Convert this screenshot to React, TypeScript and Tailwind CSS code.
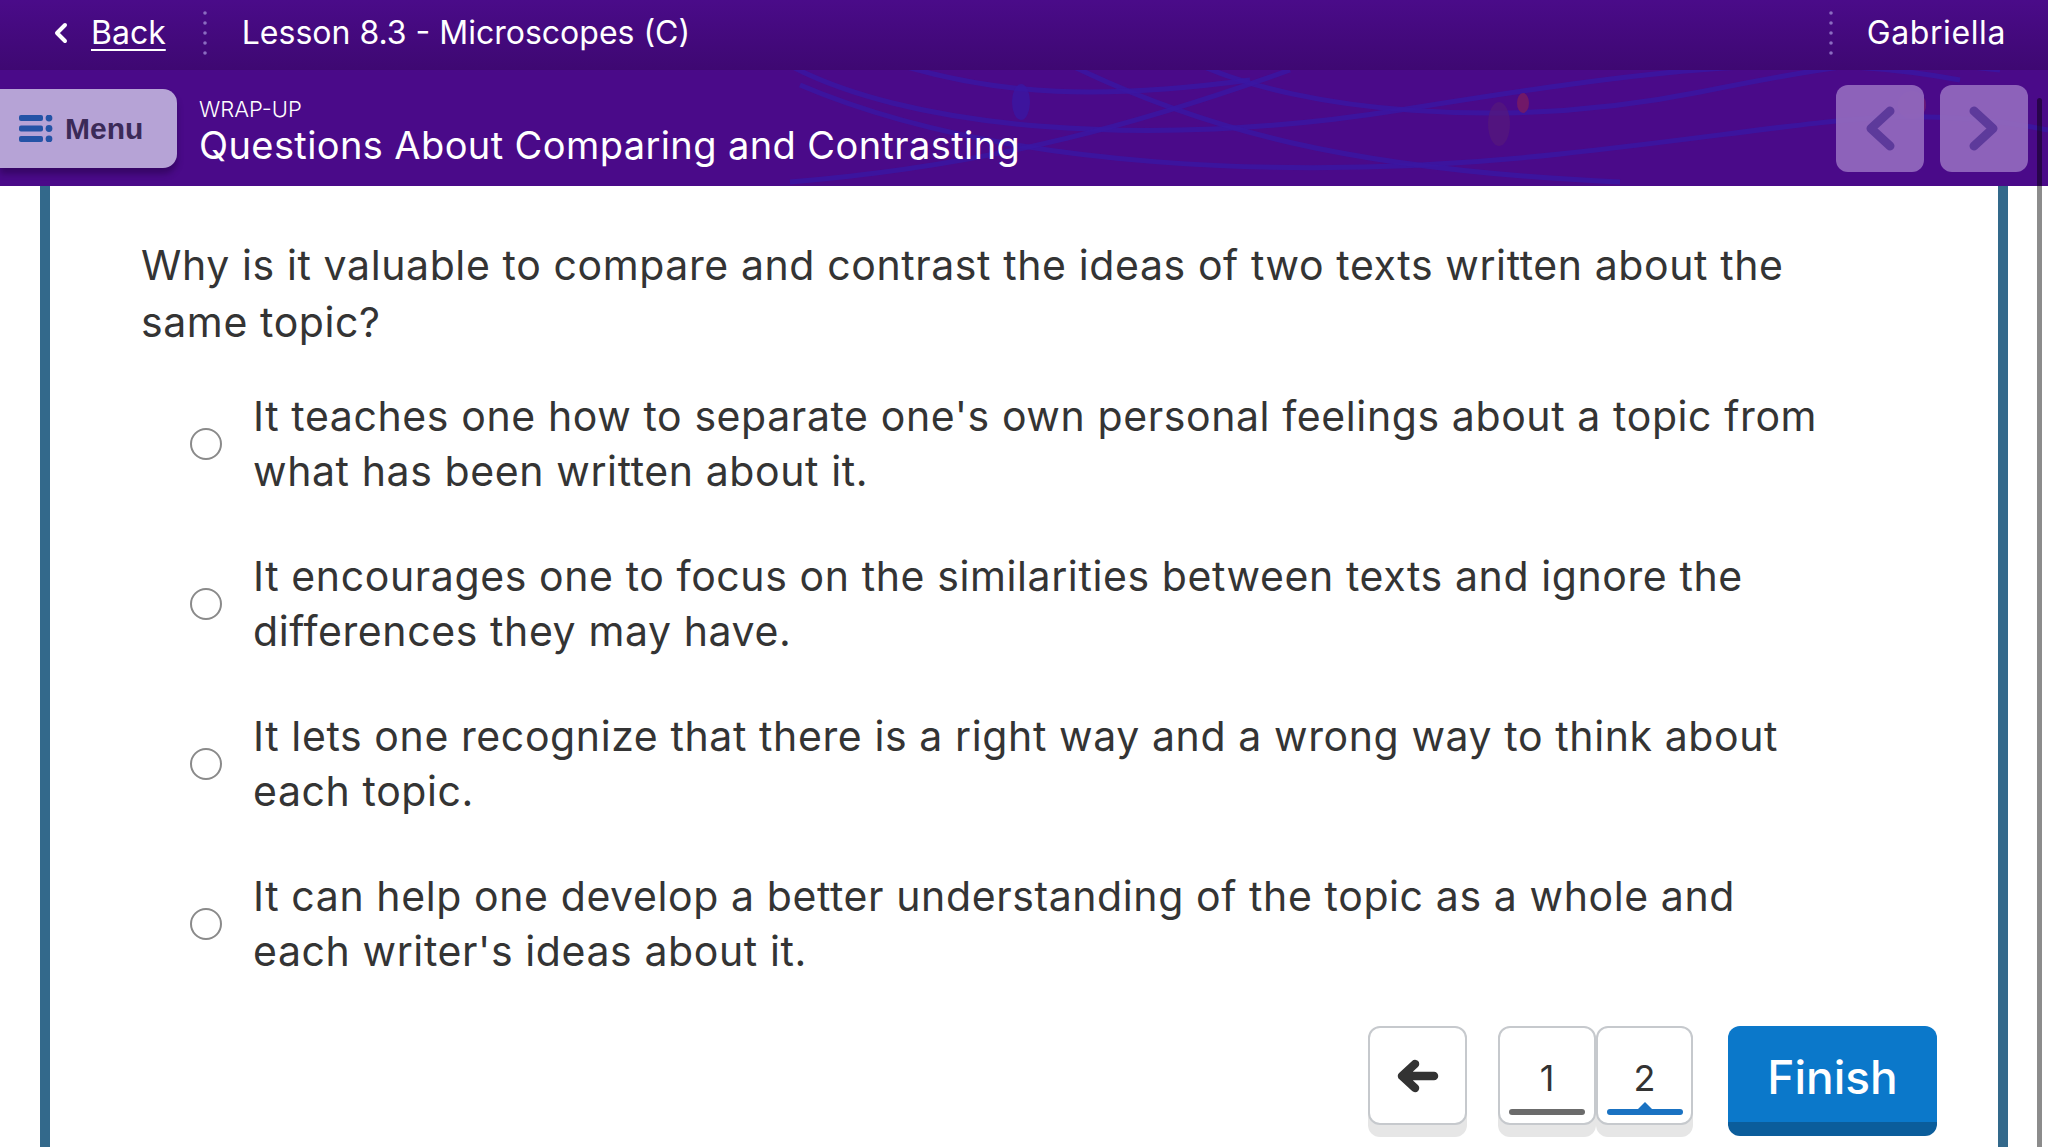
import React from 'react';

const font = { fontFamily: '"Inter", "Noto Sans", sans-serif' };

const Dots = () => (
  <svg width="4" height="44" viewBox="0 0 4 44" className="shrink-0">
    {[2, 12, 22, 32, 42].map((cy) => (
      <circle key={cy} cx="2" cy={cy} r="1.8" fill="#8a6cc0" />
    ))}
  </svg>
);

const MenuIcon = () => (
  <svg width="34" height="27" viewBox="0 0 34 27" className="shrink-0">
    <rect x="0" y="0" width="24" height="6" rx="2" fill="#2453a6" />
    <rect x="0" y="10.5" width="24" height="6" rx="2" fill="#2453a6" />
    <rect x="0" y="21" width="24" height="6" rx="2" fill="#2453a6" />
    <circle cx="30" cy="3" r="3.4" fill="#2453a6" />
    <circle cx="30" cy="13.5" r="3.4" fill="#2453a6" />
    <circle cx="30" cy="24" r="3.4" fill="#2453a6" />
  </svg>
);

const Chevron = ({ dir }: { dir: 'left' | 'right' }) => (
  <svg width="34" height="45" viewBox="0 0 34 45">
    <polyline
      points={dir === 'left' ? '27,5 8,22.5 27,40' : '7,5 26,22.5 7,40'}
      fill="none"
      stroke="#5d3a9b"
      strokeWidth="9"
      strokeLinecap="round"
      strokeLinejoin="round"
    />
  </svg>
);

// faint wires drawn behind the lesson title
const HeaderArt = () => (
  <svg className="absolute inset-0 pointer-events-none" width="2048" height="116" viewBox="0 0 2048 116">
    <g fill="none" stroke="#3a16a2" strokeOpacity="0.85" strokeWidth="5">
      <path d="M780 -10 C 900 60, 1150 80, 1400 40 S 1800 -20, 1960 10" />
      <path d="M800 15 C 1000 100, 1300 112, 1560 84 S 1900 30, 2048 60" />
      <path d="M1060 -10 C 1200 60, 1350 100, 1620 112" />
      <path d="M1200 -5 C 1300 40, 1500 62, 1700 22 S 1900 -10, 2000 0" />
      <path d="M1290 0 C 1150 50, 1000 95, 790 112" />
      <path d="M900 -5 C 1000 25, 1100 30, 1250 10" />
    </g>
    <ellipse cx="1021" cy="32" rx="9" ry="18" fill="#3a16a2" fillOpacity="0.8" />
    <ellipse cx="1499" cy="54" rx="11" ry="22" fill="#55187a" fillOpacity="0.7" />
    <ellipse cx="1523" cy="33" rx="6" ry="10" fill="#7a1c60" fillOpacity="0.8" />
    <circle cx="1912" cy="35" r="14" fill="#8a2a6a" fillOpacity="0.5" />
  </svg>
);

const options = [
  ["It teaches one how to separate one's own personal feelings about a topic from", 'what has been written about it.'],
  ['It encourages one to focus on the similarities between texts and ignore the', 'differences they may have.'],
  ['It lets one recognize that there is a right way and a wrong way to think about', 'each topic.'],
  ['It can help one develop a better understanding of the topic as a whole and', "each writer's ideas about it."],
];

const Option = ({ lines }: { lines: string[] }) => (
  <label className="flex items-center gap-[31px] pl-[49px] cursor-pointer">
    <span className="w-[32px] h-[32px] rounded-full border-[2.5px] border-[#8a8a8a] bg-white shrink-0" />
    <span className="text-[41px] leading-[55px] text-[#343434] tracking-[0.6px]">
      {lines.map((l) => (
        <span key={l} className="block whitespace-nowrap">
          {l}
        </span>
      ))}
    </span>
  </label>
);

export default function App() {
  return (
    <div className="relative w-full h-[1147px] overflow-hidden bg-white" style={font}>
      {/* top bar */}
      <div className="h-[70px] bg-gradient-to-b from-[#4a0b89] to-[#3e0872] flex items-center text-white text-[32px] pl-[53px] pr-[42px] pb-[5px]">
        <svg width="16" height="22" viewBox="0 0 16 22" className="shrink-0">
          <polyline points="12,3 4,11 12,19" fill="none" stroke="white" strokeWidth="4" strokeLinecap="round" strokeLinejoin="round" />
        </svg>
        <span className="ml-[22px] underline underline-offset-[5px] decoration-2">Back</span>
        <span className="ml-[37px]">
          <Dots />
        </span>
        <span className="ml-[35px]">Lesson 8.3 - Microscopes (C)</span>
        <span className="ml-auto">
          <Dots />
        </span>
        <span className="ml-[34px] tracking-[0.6px]">Gabriella</span>
      </div>

      {/* lesson header */}
      <div className="relative h-[116px] bg-[#4a0a89] flex items-center">
        <HeaderArt />
        <button className="relative w-[177px] h-[79px] rounded-r-[14px] bg-[#b6a3d6] shadow-[0_6px_6px_rgba(30,0,60,0.45)] flex items-center pl-[19px] gap-[12px]">
          <MenuIcon />
          <span className="text-[30px] font-bold text-[#3b2a58]" style={{ fontFamily: '"Liberation Sans", Arial, sans-serif' }}>
            Menu
          </span>
        </button>
        <div className="relative ml-[22px] mt-[6px] flex flex-col text-white">
          <span className="text-[22px] leading-[28px] font-light">WRAP-UP</span>
          <span className="text-[38px] leading-[44px] tracking-[0.4px]">Questions About Comparing and Contrasting</span>
        </div>
        <div className="relative ml-auto mr-[20px] flex gap-[16px]">
          <button className="w-[88px] h-[87px] rounded-[12px] bg-[#9067bd]/95 flex items-center justify-center">
            <Chevron dir="left" />
          </button>
          <button className="w-[88px] h-[87px] rounded-[12px] bg-[#9067bd]/95 flex items-center justify-center">
            <Chevron dir="right" />
          </button>
        </div>
      </div>

      {/* content panel */}
      <div className="ml-[40px] w-[1968px] h-[961px] border-x-[10px] border-[#33698b] bg-white flex flex-col pl-[91px] pr-[61px] pt-[51px]">
        <p className="text-[41px] leading-[57px] text-[#343434] tracking-[0.6px]">
          <span className="block whitespace-nowrap">Why is it valuable to compare and contrast the ideas of two texts written about the</span>
          <span className="block whitespace-nowrap">same topic?</span>
        </p>

        <div className="mt-[38px] flex flex-col gap-[50px]">
          {options.map((o) => (
            <Option key={o[0]} lines={o} />
          ))}
        </div>

        <div className="mt-[47px] flex justify-end items-start">
          <button className="w-[99px] h-[99px] rounded-[12px] border-2 border-[#c6c9cd] bg-white shadow-[0_12px_0_#e6e6e6] flex items-center justify-center">
            <svg width="42" height="34" viewBox="0 0 42 34">
              <path d="M18 5 L5 17 L18 29 M6 17 H37" fill="none" stroke="#333" strokeWidth="8.5" strokeLinecap="round" strokeLinejoin="round" />
            </svg>
          </button>
          <div className="ml-[31px] flex">
            <button className="w-[98px] h-[99px] rounded-[12px] border-2 border-[#c6c9cd] bg-white shadow-[0_12px_0_#e6e6e6] flex flex-col items-center pt-[28px]">
              <span className="text-[36px] leading-[44px] text-[#333]">1</span>
              <span className="mt-[9px] w-[76px] h-[6px] rounded-full bg-[#6b6b6b]" />
            </button>
            <button className="w-[97px] h-[99px] rounded-[12px] border-2 border-[#c6c9cd] bg-white shadow-[0_12px_0_#e6e6e6] flex flex-col items-center pt-[28px]">
              <span className="text-[36px] leading-[44px] text-[#333]">2</span>
              <span className="relative mt-[9px] w-[76px] h-[6px] rounded-full bg-[#1a72c2]">
                <span className="absolute left-1/2 -translate-x-1/2 -top-[7px] w-0 h-0 border-x-[8px] border-x-transparent border-b-[8px] border-b-[#1a72c2]" />
              </span>
            </button>
          </div>
          <button className="ml-[35px] w-[209px] h-[110px] rounded-[12px] bg-[#0b78ca] border-b-[14px] border-[#0b5d9b] text-white text-[46px] font-medium flex items-center justify-center pt-[7px]">
            Finish
          </button>
        </div>
      </div>

      {/* scrollbar */}
      <div className="absolute left-[2037px] top-[98px] bottom-0 w-[5px] bg-black/45 rounded-t-full" />
    </div>
  );
}
